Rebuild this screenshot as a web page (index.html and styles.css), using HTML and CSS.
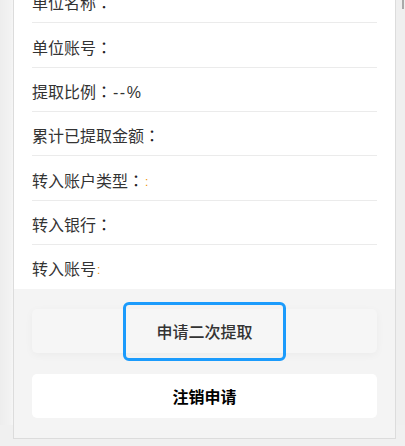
FILE: index.html
```html
<!DOCTYPE html>
<html lang="zh-CN">
<head>
<meta charset="utf-8">
<title>提取详情</title>
<link rel="stylesheet" href="styles.css">
</head>
<body>
<div class="page">
  <div class="panel">
    <ul class="info-list">
      <li class="info-row">单位名称<span class="colon" lang="ja">：</span></li>
      <li class="info-row">单位账号<span class="colon" lang="ja">：</span></li>
      <li class="info-row">提取比例<span class="colon" lang="ja">：</span><span class="latin">--%</span></li>
      <li class="info-row">累计已提取金额<span class="colon" lang="ja">：</span></li>
      <li class="info-row">转入账户类型<span class="colon" lang="ja">：</span><span class="hint">:</span></li>
      <li class="info-row">转入银行<span class="colon" lang="ja">：</span></li>
      <li class="info-row">转入账号<span class="hint">:</span></li>
    </ul>
    <div class="actions">
      <button class="btn btn-secondary"><span class="btn-label focused">申请二次提取</span></button>
      <button class="btn btn-primary"><span class="btn-label">注销申请</span></button>
    </div>
  </div>
  <div class="scrollbar"><div class="thumb"></div></div>
</div>
</body>
</html>
```

FILE: styles.css
```css
* { box-sizing: border-box; }
html, body {
  margin: 0;
  padding: 0;
  height: 100%;
  overflow: hidden;
  background: #f0f0f0;
}
body {
  font-family: "Noto Sans CJK SC", "Noto Sans", sans-serif;
  color: #333;
}
.page {
  position: relative;
  height: 100%;
  background: linear-gradient(to right, #ededed 0, #f2f2f2 10px, #f6f6f6 13px);
}
.panel {
  margin-left: 13px;
  width: 383px;
  margin-top: -21.2px;
  border: 1px solid #dcdcdc;
  border-top: none;
  background: #f4f4f4;
}
.info-list {
  list-style: none;
  margin: 0;
  padding: 0 18px;
  background: #fff;
}
.info-row {
  font-size: 16px;
  line-height: 24px;
  height: 44.4px;
  padding-top: 11.3px;
  border-bottom: 1px solid #ebebeb;
  white-space: nowrap;
}
.info-row:last-child {
  border-bottom: none;
  height: 43.4px;
}
.colon {
  font-family: "Noto Sans CJK JP", "Noto Sans CJK SC", sans-serif;
  color: #222;
}
.latin {
  font-family: "Liberation Sans", "Noto Sans", sans-serif;
  margin-left: 1px;
  letter-spacing: 1.5px;
}
.hint {
  font-family: "Liberation Sans", sans-serif;
  font-size: 12px;
  color: #f0920a;
  vertical-align: 1px;
  margin-left: 1px;
}
.actions {
  display: flex;
  flex-direction: column;
  gap: 21px;
  padding: 20px 18px 20px;
}
.btn {
  height: 44px;
  border: none;
  border-radius: 5px;
  font-family: inherit;
  font-size: 16px;
  display: flex;
  align-items: center;
  justify-content: center;
  padding: 0;
  overflow: visible;
}
.btn-secondary {
  background: #f6f6f6;
  color: #333;
  font-weight: 500;
  box-shadow: 0 2px 8px rgba(0, 0, 0, 0.04);
}
.btn-primary {
  background: #fff;
  color: #000;
  font-weight: 700;
}
.btn-label {
  line-height: 24px;
}
.focused {
  display: inline-block;
  padding: 14px 30px 15px;
  margin-top: 1px;
  border-radius: 3px;
  outline: 3px solid #1b9bfc;
  outline-offset: 0;
}
.scrollbar {
  position: absolute;
  top: 0;
  right: 0;
  width: 9px;
  height: 100%;
  background: #efefef;
}
.thumb {
  position: absolute;
  left: 6px;
  top: 4px;
  width: 2px;
  height: 26px;
  background: #a9a9a9;
}
```
